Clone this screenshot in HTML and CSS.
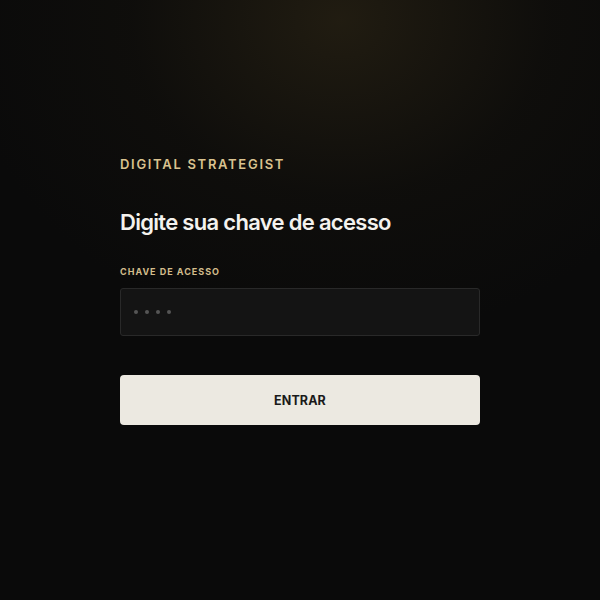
FILE: index.html
```html
<!DOCTYPE html>
<html lang="pt">
<head>
<meta charset="utf-8">
<link rel="stylesheet" href="styles.css">
</head>
<body>
<main class="page">
  <section class="card">
    <p class="eyebrow">DIGITAL STRATEGIST</p>
    <h1 class="title">Digite sua chave de acesso</h1>
    <label class="label" for="key">CHAVE DE ACESSO</label>
    <div class="field" id="key">
      <span class="dot"></span><span class="dot"></span><span class="dot"></span><span class="dot"></span>
    </div>
    <button class="btn" type="button">ENTRAR</button>
  </section>
</main>
</body>
</html>
```
FILE: styles.css
```css
html, body {
  margin: 0;
  padding: 0;
  height: 100%;
}
body {
  background-color: #0a0a0a;
  background-image:
    radial-gradient(ellipse 380px 320px at 340px 20px, rgba(48, 40, 22, 0.6), rgba(28, 24, 15, 0.25) 55%, rgba(10, 10, 10, 0) 100%);
  font-family: Inter, "Noto Sans", sans-serif;
}
.page {
  display: flex;
  justify-content: center;
  padding-top: 156px;
}
.card {
  width: 360px;
  display: flex;
  flex-direction: column;
}
.eyebrow {
  margin: 0;
  color: #d9c28f;
  font-size: 13px;
  font-weight: 600;
  letter-spacing: 1.7px;
  line-height: 16px;
}
.title {
  margin: 36px 0 0;
  color: #f4f2ee;
  font-size: 22px;
  font-weight: 600;
  letter-spacing: -0.7px;
  line-height: 28px;
}
.label {
  margin-top: 30px;
  color: #d3bd8c;
  font-size: 9px;
  font-weight: 700;
  letter-spacing: 1px;
  line-height: 12px;
}
.field {
  margin-top: 10px;
  height: 46px;
  background: #141414;
  border: 1px solid #292929;
  border-radius: 3px;
  display: flex;
  align-items: center;
  gap: 7px;
  padding-left: 13px;
}
.dot {
  width: 4px;
  height: 4px;
  border-radius: 50%;
  background: #555;
}
.btn {
  margin-top: 39px;
  height: 50px;
  border: 0;
  border-radius: 4px;
  background: #ece9e1;
  color: #1a1a1a;
  font-family: Inter, "Noto Sans", sans-serif;
  font-size: 12.5px;
  font-weight: 700;
  letter-spacing: 0.1px;
}
```
